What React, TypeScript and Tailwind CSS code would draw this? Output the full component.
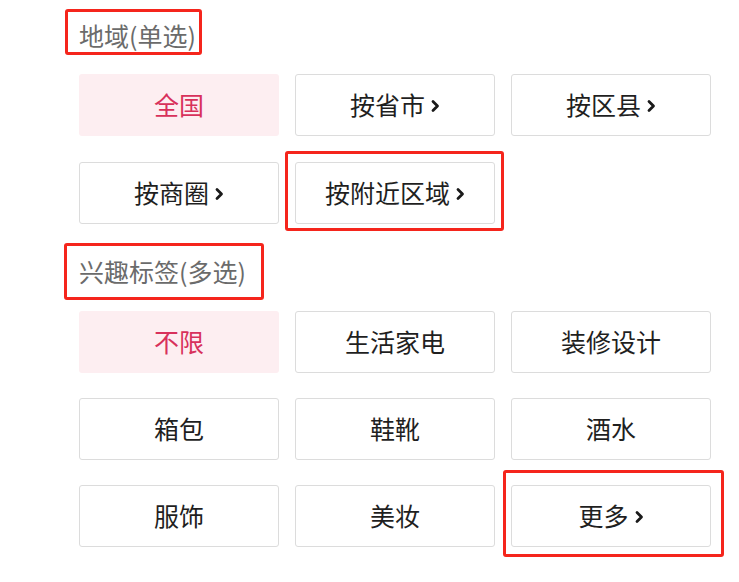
import React from 'react';

type Opt = { label: string; arrow?: boolean; active?: boolean; mark?: string };

const region: Opt[] = [
  { label: '全国', active: true },
  { label: '按省市', arrow: true },
  { label: '按区县', arrow: true },
  { label: '按商圈', arrow: true },
  { label: '按附近区域', arrow: true, mark: '-left-[10px] -right-[9px] -top-[11px] -bottom-[7px]' },
];

const tags: Opt[] = [
  { label: '不限', active: true },
  { label: '生活家电' },
  { label: '装修设计' },
  { label: '箱包' },
  { label: '鞋靴' },
  { label: '酒水' },
  { label: '服饰' },
  { label: '美妆' },
  { label: '更多', arrow: true, mark: '-left-[8px] -right-[13px] -top-[15px] -bottom-[10px]' },
];

const Chevron = () => (
  <svg className="w-[10px] h-[14px] ml-[5px] mt-[2px]" viewBox="0 0 10 14" fill="none" stroke="#1a1a1a" strokeWidth="2.8" strokeLinecap="round" strokeLinejoin="round">
    <path d="M3 2.5l4.5 4.5L3 11.5" />
  </svg>
);

const OptionButton: React.FC<{ opt: Opt }> = ({ opt }) => (
  <div className="relative">
    <button
      className={
        opt.active
          ? 'w-full h-[62px] rounded-[3px] bg-[#fdeef1] flex items-center justify-center text-[25px] text-[#d8315b]'
          : 'w-full h-[62px] rounded-[3px] border border-[#dcdcdc] bg-white flex items-center justify-center text-[25px] text-[#1f1f1f]'
      }
    >
      <span>{opt.label}</span>
      {opt.arrow && <Chevron />}
    </button>
    {opt.mark && (
      <div className={'absolute border-[3px] border-[#f5251c] rounded-[3px] pointer-events-none ' + opt.mark} />
    )}
  </div>
);

const SectionTitle: React.FC<{ text: string; box: string }> = ({ text, box }) => (
  <div className="relative inline-block self-start text-[25px] leading-[30px] text-[#6b6b6b] h-[30px]">
    {text}
    <div className={'absolute border-[3px] border-[#f5251c] rounded-[3px] ' + box} />
  </div>
);

export default function App() {
  return (
    <div
      className="w-[739px] h-[582px] bg-white overflow-hidden pl-[79px] flex flex-col"
      style={{ fontFamily: '"Noto Sans CJK SC", "Noto Sans", sans-serif' }}
    >
      <div className="mt-[20px] flex flex-col">
        <SectionTitle text="地域(单选)" box="-left-[14px] -right-[6px] -top-[11px] -bottom-[5px]" />
      </div>
      <div className="mt-[24px] grid grid-cols-3 w-[632px] gap-x-4 gap-y-[26px]">
        {region.map((o) => (
          <OptionButton key={o.label} opt={o} />
        ))}
      </div>
      <div className="mt-[32px] flex flex-col">
        <SectionTitle text="兴趣标签(多选)" box="-left-[15px] -right-[18px] -top-[13px] -bottom-[14px]" />
      </div>
      <div className="mt-[25px] grid grid-cols-3 w-[632px] gap-x-4 gap-y-[25px]">
        {tags.map((o) => (
          <OptionButton key={o.label} opt={o} />
        ))}
      </div>
    </div>
  );
}
